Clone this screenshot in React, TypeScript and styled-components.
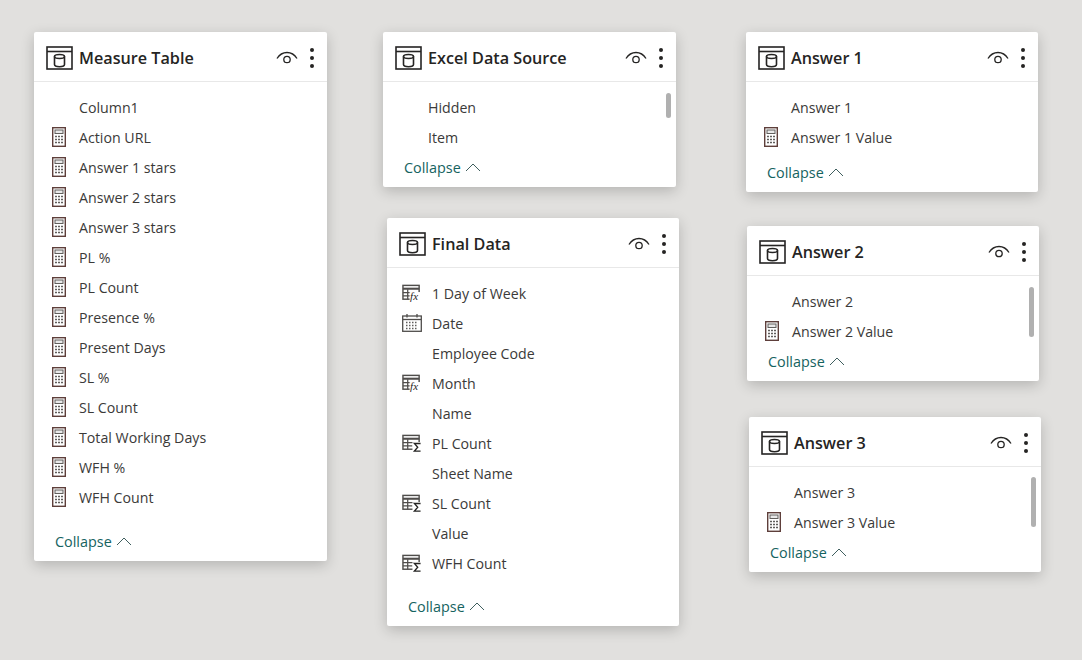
import React from 'react';
import styled, { createGlobalStyle } from 'styled-components';

const GlobalStyle = createGlobalStyle`
  html, body {
    margin: 0;
    padding: 0;
    background: #e1e0de;
  }
  body {
    font-family: "Open Sans", "Noto Sans", "Liberation Sans", sans-serif;
  }
`;

const Canvas = styled.div`
  position: relative;
  width: 1082px;
  height: 660px;
  overflow: hidden;
  background: #e1e0de;
`;

const Card = styled.section<{ $x: number; $y: number; $w: number; $h: number }>`
  position: absolute;
  left: ${({ $x }) => $x}px;
  top: ${({ $y }) => $y}px;
  width: ${({ $w }) => $w}px;
  height: ${({ $h }) => $h}px;
  display: flex;
  flex-direction: column;
  background: #fff;
  border-radius: 2px;
  box-shadow: 0 4px 14px rgba(0, 0, 0, 0.2);
`;

const Header = styled.header`
  flex: none;
  height: 47px;
  display: flex;
  align-items: center;
  padding: 2px 5px 0 12px;
  border-bottom: 1px solid #e8e8e8;
`;

const Title = styled.h2`
  flex: 1;
  margin: 0 0 0 6px;
  font-size: 16.2px;
  font-weight: 600;
  color: #252423;
  white-space: nowrap;
`;

const Dots = styled.div`
  display: flex;
  flex-direction: column;
  gap: 4px;
  width: 20px;
  align-items: center;
  margin-left: 4px;

  i {
    width: 4px;
    height: 4px;
    border-radius: 50%;
    background: #252423;
  }
`;

const List = styled.div`
  flex: 1;
  position: relative;
  overflow: hidden;
  padding-top: 10px;
`;

const Row = styled.div`
  height: 30px;
  display: flex;
  align-items: center;
  padding-left: 15px;
  font-size: 14.2px;
  color: #3b3a39;
  white-space: nowrap;
`;

const IconSlot = styled.span`
  flex: none;
  width: 20px;
  height: 20px;
  margin-right: 10px;
  display: flex;
  align-items: center;
  justify-content: center;
`;

const Scrollbar = styled.div<{ $top: number; $h: number }>`
  position: absolute;
  right: 5px;
  top: ${({ $top }) => $top}px;
  width: 5px;
  height: ${({ $h }) => $h}px;
  border-radius: 3px;
  background: #b0b0b0;
`;

const Footer = styled.footer<{ $h: number }>`
  flex: none;
  height: ${({ $h }) => $h}px;
  display: flex;
  align-items: center;
  gap: 4px;
  padding-left: 21px;
  font-size: 14.4px;
  color: #16635f;
`;

const TableIcon = () => (
  <svg width="27" height="24" viewBox="0 0 27 24" fill="none" stroke="#252423" strokeWidth="1.600">
    <rect x="1" y="1" width="25" height="22" />
    <path d="M1 5.500h25" />
    <path d="M8.500 10.500v8c0 1.400 2.200 2.200 5 2.200s5-.8 5-2.200v-8" />
    <ellipse cx="13.500" cy="10.500" rx="5" ry="2" />
  </svg>
);

const EyeIcon = () => (
  <svg width="22" height="14" viewBox="0 0 22 14" fill="none" stroke="#252423" strokeWidth="1.300">
    <path d="M1 7.500C3.500 3.500 7 1.500 11 1.500s7.500 2 10 6" />
    <circle cx="11" cy="8.500" r="3.200" />
  </svg>
);

const CalcIcon = () => (
  <svg width="14" height="20" viewBox="0 0 14 20" fill="none">
    <rect x="0.700" y="0.700" width="12.600" height="18.600" fill="#fff" stroke="#5e3f3b" strokeWidth="1.400" />
    <rect x="3" y="3" width="8" height="3.500" fill="#e8e8e8" stroke="#605e5c" />
    <path d="M3 9.500h2M6 9.500h2M9 9.500h2M3 12.500h2M6 12.500h2M9 12.500h2M3 15.500h2M6 15.500h2M9 15.500h2" stroke="#605e5c" strokeWidth="1.500" />
  </svg>
);

const TableLines = () => (
  <>
    <rect x="1" y="1" width="17" height="14.500" stroke="#4f4d4b" strokeWidth="1.500" fill="#fff" />
    <path d="M1 4.500h17" stroke="#4f4d4b" strokeWidth="2.200" />
    <path d="M6 5v10.500M1 8.500h5M1 12h5M6 8.500h7M6 12h5" stroke="#4f4d4b" strokeWidth="1.300" />
  </>
);

const FxIcon = () => (
  <svg width="21" height="18" viewBox="0 0 21 18" fill="none">
    <TableLines />
    <rect x="8" y="8" width="13" height="10" fill="#fff" />
    <text x="8.500" y="16.500" fontFamily="Liberation Serif, serif" fontStyle="italic" fontSize="11.500" fill="#252423">fx</text>
  </svg>
);

const SigmaIcon = () => (
  <svg width="21" height="19" viewBox="0 0 21 19" fill="none">
    <TableLines />
    <rect x="11" y="8" width="10" height="11" fill="#fff" />
    <path d="M19.500 9.500h-6.500l3.500 4-3.500 4h6.500" stroke="#252423" strokeWidth="1.400" />
  </svg>
);

const CalendarIcon = () => (
  <svg width="20" height="18" viewBox="0 0 20 18" fill="none">
    <rect x="0.700" y="2" width="18.600" height="15.300" stroke="#4f4d4b" strokeWidth="1.300" />
    <path d="M1 5.500h18" stroke="#4f4d4b" strokeWidth="1.300" />
    <path d="M5 0v3.500M15 0v3.500" stroke="#4f4d4b" strokeWidth="1.300" />
    <path d="M4 8.500h12M4 11.500h12M4 14.500h12" stroke="#605e5c" strokeWidth="1.500" strokeDasharray="1.500 1.500" />
  </svg>
);

const Chevron = () => (
  <svg width="16" height="9" viewBox="0 0 16 9" fill="none" stroke="#3f5f5e" strokeWidth="1">
    <path d="M1 8l7-7 7 7" />
  </svg>
);

type Kind = 'calc' | 'fx' | 'sigma' | 'date' | 'none';

const icons: Record<Kind, React.ReactNode> = {
  calc: <CalcIcon />,
  fx: <FxIcon />,
  sigma: <SigmaIcon />,
  date: <CalendarIcon />,
  none: null,
};

type Table = {
  title: string;
  x: number;
  y: number;
  w: number;
  h: number;
  footer: number;
  rows: [Kind, string][];
  scroll?: [number, number];
};

const calcNames = [
  'Action URL', 'Answer 1 stars', 'Answer 2 stars', 'Answer 3 stars', 'PL %', 'PL Count', 'Presence %',
  'Present Days', 'SL %', 'SL Count', 'Total Working Days', 'WFH %', 'WFH Count',
];

const tables: Table[] = [
  {
    title: 'Measure Table', x: 34, y: 32, w: 292.5, h: 529, footer: 39,
    rows: [['none', 'Column1'], ...calcNames.map((n): [Kind, string] => ['calc', n])],
  },
  {
    title: 'Excel Data Source', x: 383, y: 32, w: 292.5, h: 155, footer: 39,
    rows: [['none', 'Hidden'], ['none', 'Item']],
    scroll: [11, 25],
  },
  {
    title: 'Final Data', x: 387, y: 218, w: 292, h: 408, footer: 39,
    rows: [
      ['fx', '1 Day of Week'], ['date', 'Date'], ['none', 'Employee Code'], ['fx', 'Month'], ['none', 'Name'],
      ['sigma', 'PL Count'], ['none', 'Sheet Name'], ['sigma', 'SL Count'], ['none', 'Value'], ['sigma', 'WFH Count'],
    ],
  },
  {
    title: 'Answer 1', x: 746, y: 32, w: 292, h: 160, footer: 39,
    rows: [['none', 'Answer 1'], ['calc', 'Answer 1 Value']],
  },
  {
    title: 'Answer 2', x: 747, y: 226, w: 292, h: 155, footer: 39,
    rows: [['none', 'Answer 2'], ['calc', 'Answer 2 Value']],
    scroll: [11, 50],
  },
  {
    title: 'Answer 3', x: 749, y: 417, w: 292, h: 155, footer: 39,
    rows: [['none', 'Answer 3'], ['calc', 'Answer 3 Value']],
    scroll: [10, 50],
  },
];

const App = () => (
  <Canvas>
    <GlobalStyle />
    {tables.map((t) => (
      <Card key={t.title} $x={t.x} $y={t.y} $w={t.w} $h={t.h}>
        <Header>
          <TableIcon />
          <Title>{t.title}</Title>
          <EyeIcon />
          <Dots>
            <i />
            <i />
            <i />
          </Dots>
        </Header>
        <List>
          {t.rows.map(([kind, name]) => (
            <Row key={name}>
              <IconSlot>{icons[kind]}</IconSlot>
              {name}
            </Row>
          ))}
          {t.scroll && <Scrollbar $top={t.scroll[0]} $h={t.scroll[1]} />}
        </List>
        <Footer $h={t.footer}>
          Collapse
          <Chevron />
        </Footer>
      </Card>
    ))}
  </Canvas>
);

export default App;
